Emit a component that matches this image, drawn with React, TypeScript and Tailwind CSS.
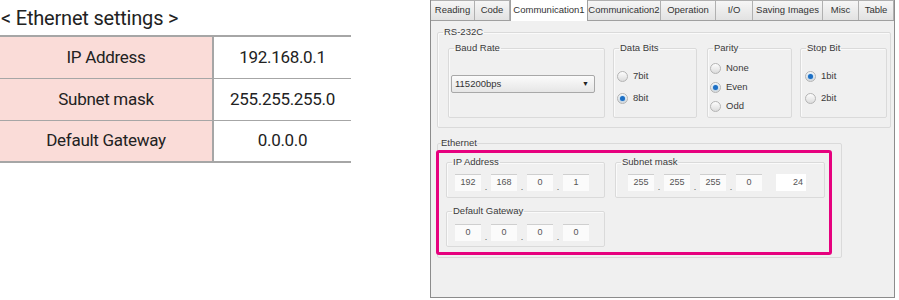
import React from 'react';

const rows = [
  { label: 'IP Address', value: '192.168.0.1' },
  { label: 'Subnet mask', value: '255.255.255.0' },
  { label: 'Default Gateway', value: '0.0.0.0' },
];

const tabs = [
  { name: 'Reading', width: 'w-[44px]' },
  { name: 'Code', width: 'w-[35px]' },
  { name: 'Communication1', width: 'w-[78px]', active: true },
  { name: 'Communication2', width: 'w-[73px]' },
  { name: 'Operation', width: 'w-[55px]' },
  { name: 'I/O', width: 'w-[37px]' },
  { name: 'Saving Images', width: 'w-[70px]' },
  { name: 'Misc', width: 'w-[36px]' },
  { name: 'Table', width: 'w-[35px]' },
];

function Group({ title, className, children }: { title: string; className: string; children?: React.ReactNode }) {
  return (
    <fieldset className={`rounded-[2px] border border-[#dadada] shadow-[inset_1px_1px_0_#fafafa] ${className}`}>
      <legend className="ml-[5px] px-[1px] leading-[12px] text-[#3a3a3a]">{title}</legend>
      {children}
    </fieldset>
  );
}

function Radio({ label, checked }: { label: string; checked?: boolean }) {
  return (
    <div className="flex h-[12px] items-center gap-[5px]">
      <span className="flex h-[11px] w-[11px] items-center justify-center rounded-full border border-[#b4b4b4] bg-linear-to-b from-[#fdfdfd] to-[#dcdcdc]">
        {checked && <span className="h-[5px] w-[5px] rounded-full bg-[#1d6fc4] shadow-[0_0_2px_#63b0f2]" />}
      </span>
      <span className="text-[#3a3a3a]">{label}</span>
    </div>
  );
}

function Field({ value }: { value: string }) {
  return (
    <div className="flex h-[17px] w-[26px] items-center justify-center border-t border-[#cfcfcf] bg-[#fbfbfb] text-[9px] text-[#555]">
      {value}
    </div>
  );
}

function Dot() {
  return <span className="w-[10px] self-end text-center text-[9px] leading-[8px] text-[#555]">.</span>;
}

function Address({ parts }: { parts: string[] }) {
  return (
    <div className="flex">
      {parts.map((p, i) => (
        <React.Fragment key={i}>
          {i > 0 && <Dot />}
          <Field value={p} />
        </React.Fragment>
      ))}
    </div>
  );
}

export default function App() {
  return (
    <div className="flex h-[300px] w-[899px] bg-white">
      {/* settings table */}
      <div className="w-[351px] font-['Roboto',sans-serif] text-[#222]">
        <div className="flex h-[35px] items-center pl-[1px] text-[20px] tracking-[-0.2px]">&lt; Ethernet settings &gt;</div>
        <div className="border-t-2 border-[#a6a6a6]">
          {rows.map((row, i) => (
            <div
              key={row.label}
              className={`flex h-[42px] text-[17px] tracking-[-0.3px] ${i === rows.length - 1 ? 'border-b-2' : 'border-b'} border-[#a6a6a6]`}
            >
              <div className="flex w-[214px] items-center justify-center border-r-2 border-[#a6a6a6] bg-[#fadcd8]">
                {row.label}
              </div>
              <div className="flex flex-1 items-center justify-center">{row.value}</div>
            </div>
          ))}
        </div>
      </div>

      {/* software window */}
      <div className="ml-[79px] flex h-[298px] w-[465px] flex-col border-x border-b border-[#8c8c8c] bg-[#f0f0f0] font-['Liberation_Sans',Arial,sans-serif] text-[9.5px] text-[#333]">
        <div className="flex h-[21px] items-end border-b border-[#a0a0a0] bg-white">
          {tabs.map((t) =>
            t.active ? (
              <div
                key={t.name}
                className={`${t.width} -mb-[1px] flex h-[22px] items-center justify-center border-x border-t border-[#a0a0a0] bg-white`}
              >
                {t.name}
              </div>
            ) : (
              <div
                key={t.name}
                className={`${t.width} flex h-[20px] items-center justify-center border-t border-r border-[#b0b0b0] bg-linear-to-b from-[#f6f6f6] to-[#e2e2e2]`}
              >
                {t.name}
              </div>
            )
          )}
        </div>

        <div className="flex-1 pt-[5px]">
          <Group title="RS-232C" className="ml-[6px] mr-[3px] pb-[9px]">
            <div className="mt-[4px] flex pl-[10px]">
              <Group title="Baud Rate" className="h-[76px] w-[157px]">
                <div className="ml-[2px] mt-[21px] flex h-[18px] w-[144px] items-center justify-between rounded-[2px] border border-[#a8a8a8] bg-linear-to-b from-[#fbfbfb] to-[#e6e6e6] pl-[3px] pr-[5px]">
                  <span>115200bps</span>
                  <span className="text-[7px] text-[#222]">▼</span>
                </div>
              </Group>
              <Group title="Data Bits" className="ml-[8px] h-[76px] w-[84px]">
                <div className="mt-[16px] flex flex-col gap-[10px] pl-[3px]">
                  <Radio label="7bit" />
                  <Radio label="8bit" checked />
                </div>
              </Group>
              <Group title="Parity" className="ml-[10px] h-[76px] w-[85px]">
                <div className="mt-[8px] flex flex-col gap-[7px] pl-[2px]">
                  <Radio label="None" />
                  <Radio label="Even" checked />
                  <Radio label="Odd" />
                </div>
              </Group>
              <Group title="Stop Bit" className="ml-[8px] h-[76px] w-[87px]">
                <div className="mt-[16px] flex flex-col gap-[10px] pl-[4px]">
                  <Radio label="1bit" checked />
                  <Radio label="2bit" />
                </div>
              </Group>
            </div>
          </Group>

          <fieldset className="ml-[6px] mt-[9px] w-[405px] rounded-[2px] border border-[#dadada] pb-[2px]">
            <legend className="ml-[3px] leading-[12px] text-[#3a3a3a]">Ethernet</legend>
            <div className="-ml-[2px] mt-[1px] w-[396px] rounded-[3px] border-[3px] border-[#e6007e] pb-[5px] pl-[7px] pt-[3px]">
              <div className="flex gap-[10px]">
                <Group title="IP Address" className="w-[159px] pb-[6px]">
                  <div className="ml-[8px] mt-[6px]">
                    <Address parts={['192', '168', '0', '1']} />
                  </div>
                </Group>
                <Group title="Subnet mask" className="w-[210px] pb-[6px]">
                  <div className="ml-[12px] mt-[6px] flex">
                    <Address parts={['255', '255', '255', '0']} />
                    <div className="ml-[14px] flex h-[17px] w-[30px] items-center justify-end bg-white pr-[3px] text-[9px] text-[#555]">
                      24
                    </div>
                  </div>
                </Group>
              </div>
              <Group title="Default Gateway" className="mt-[7px] w-[159px] pb-[5px]">
                <div className="ml-[8px] mt-[7px]">
                  <Address parts={['0', '0', '0', '0']} />
                </div>
              </Group>
            </div>
          </fieldset>
        </div>
      </div>
    </div>
  );
}
